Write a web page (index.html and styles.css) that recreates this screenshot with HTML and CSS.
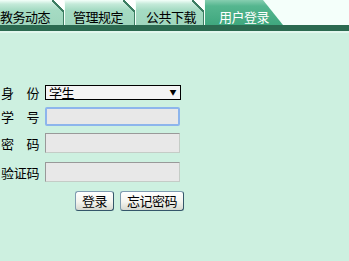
FILE: index.html
```html
<!DOCTYPE html>
<html lang="zh-CN">
<head>
    <meta charset="UTF-8">
    <title>用户登录</title>
    <link rel="stylesheet" href="styles.css">
</head>
<body>
    <div class="tabs">
        <div class="tab first">教务动态</div>
        <div class="tab">管理规定</div>
        <div class="tab">公共下载</div>
        <div class="tab active">用户登录</div>
    </div>
    <div class="bar"></div>

    <form class="login">
        <div class="row">
            <label class="name">身 份</label>
            <div class="select-wrap">
                <select class="select">
                    <option>学生</option>
                    <option>教师</option>
                </select>
                <span class="arrow">▼</span>
            </div>
        </div>
        <div class="row">
            <label class="name">学 号</label>
            <input type="text" class="field focused" autofocus>
        </div>
        <div class="row">
            <label class="name">密 码</label>
            <input type="password" class="field">
        </div>
        <div class="row">
            <label class="name">验证码</label>
            <input type="text" class="field">
        </div>
        <div class="buttons">
            <button type="submit" class="btn">登录</button>
            <button type="button" class="btn">忘记密码</button>
        </div>
    </form>
</body>
</html>
```

FILE: styles.css
```css
body {
    margin: 0;
    padding: 0;
    background: #cdf0e0;
    font-family: "Noto Sans CJK SC", sans-serif;
    font-size: 13px;
    letter-spacing: -0.5px;
    color: #000;
}

/* top tabs */
.tabs {
    display: flex;
    height: 25px;
    background: #f4fffa;
}

.tab {
    position: relative;
    box-sizing: border-box;
    width: 70px;
    height: 25px;
    padding: 8px 0 0 8px;
    line-height: 17px;
    white-space: nowrap;
    border-right: 1px solid #3c7d62;
    background: linear-gradient(#f4fffa 0, #c4ead9 4px, #a5dbc3 10px, #9fd6bd 100%);
    margin-right: 1px;
}

.tab::after {
    content: "";
    position: absolute;
    top: 0;
    right: -1px;
    width: 12px;
    height: 12px;
    background: linear-gradient(to top right, transparent 45%, #3c7d62 45%, #3c7d62 56%, #fff 56%);
}

.tab.first {
    width: 64px;
    padding-left: 0;
}

.tab:nth-child(3) {
    width: 68px;
    padding-left: 10px;
}

.tab.active {
    width: 78px;
    padding-left: 14px;
    margin-right: 0;
    border-right: none;
    color: #fff;
    background: linear-gradient(#86ceb0 0, #55b68f 6px, #3fa77e 100%);
    clip-path: polygon(0 0, 58px 0, 100% 100%, 0 100%);
}

.tab.active::after {
    display: none;
}

.bar {
    height: 6px;
    background: #2b6a50;
    border-bottom: 2px solid #e2f7ee;
}

/* login form */
.login {
    padding: 52px 0 0 1px;
}

.row {
    display: flex;
    align-items: center;
}

.name {
    flex-shrink: 0;
    width: 38px;
    margin-right: 6px;
    white-space: nowrap;
    text-align: justify;
    text-align-last: justify;
    line-height: 15px;
}

.select-wrap {
    position: relative;
    width: 136px;
    height: 15px;
}

.select {
    display: block;
    appearance: none;
    box-sizing: border-box;
    width: 136px;
    height: 15px;
    margin: 0;
    padding: 0 0 0 3px;
    border: 1px solid #000;
    border-radius: 0;
    background: #f4f4f4;
    font-family: inherit;
    font-size: 13px;
    letter-spacing: -0.5px;
    line-height: 13px;
    color: #000;
}

.arrow {
    position: absolute;
    right: 5px;
    top: 2px;
    font-size: 7px;
    line-height: 11px;
    pointer-events: none;
}

.field {
    box-sizing: border-box;
    width: 135px;
    height: 20px;
    margin: 0;
    padding: 0 2px;
    border: 1px solid #c4ccc6;
    border-top-color: #999;
    border-left-color: #999;
    background: #e8e8e8;
    font-family: inherit;
    font-size: 12px;
}

.field.focused,
.field:focus {
    height: 19px;
    border: 2px solid #8db5ec;
    border-radius: 2px;
    outline: none;
}

.row:nth-child(1) {
    margin-bottom: 7px;
}

.row:nth-child(2) {
    margin-bottom: 7px;
}

.row:nth-child(3) {
    margin-bottom: 9px;
}

.row:nth-child(4) {
    margin-bottom: 9px;
}

.buttons {
    display: flex;
    gap: 6px;
    padding-left: 74px;
}

.btn {
    height: 20px;
    padding: 0 6px;
    border: 1px solid #34566a;
    border-top-color: #7f9cb0;
    border-left-color: #7f9cb0;
    border-radius: 3px;
    background: linear-gradient(#ffffff, #f4f4ee 55%, #d6d8d0);
    font-family: inherit;
    font-size: 13px;
    letter-spacing: -0.5px;
    line-height: 16px;
    color: #000;
    cursor: pointer;
}
```
